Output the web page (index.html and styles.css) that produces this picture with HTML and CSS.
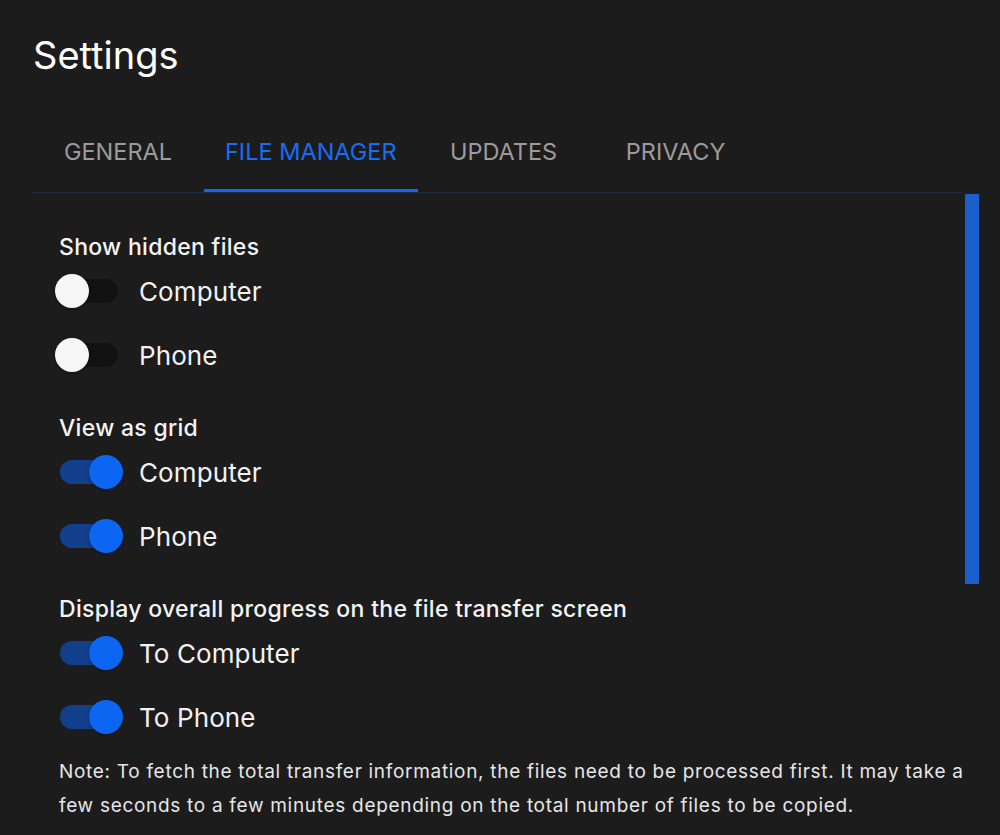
FILE: index.html
```html
<!DOCTYPE html>
<html>
<head>
<meta charset="utf-8">
<link rel="stylesheet" href="styles.css">
</head>
<body>
<div class="page">
  <h1 class="title">Settings</h1>
  <div class="tabs">
    <div class="tab">GENERAL</div>
    <div class="tab active">FILE MANAGER</div>
    <div class="tab">UPDATES</div>
    <div class="tab">PRIVACY</div>
  </div>
  <div class="body">
    <div class="content">
      <div class="section">
        <div class="heading">Show hidden files</div>
        <div class="row"><span class="switch"><span class="track"></span><span class="knob"></span></span><span class="label">Computer</span></div>
        <div class="row"><span class="switch"><span class="track"></span><span class="knob"></span></span><span class="label">Phone</span></div>
      </div>
      <div class="section">
        <div class="heading">View as grid</div>
        <div class="row"><span class="switch on"><span class="track"></span><span class="knob"></span></span><span class="label">Computer</span></div>
        <div class="row"><span class="switch on"><span class="track"></span><span class="knob"></span></span><span class="label">Phone</span></div>
      </div>
      <div class="section">
        <div class="heading">Display overall progress on the file transfer screen</div>
        <div class="row"><span class="switch on"><span class="track"></span><span class="knob"></span></span><span class="label">To Computer</span></div>
        <div class="row"><span class="switch on"><span class="track"></span><span class="knob"></span></span><span class="label">To Phone</span></div>
      </div>
      <p class="note">Note: To fetch the total transfer information, the files need to be processed first. It may take a few seconds to a few minutes depending on the total number of files to be copied.</p>
    </div>
    <div class="scrollbar"><div class="thumb"></div></div>
  </div>
</div>
</body>
</html>
```

FILE: styles.css
```css
html, body {
  margin: 0;
  padding: 0;
  background: #1c1c1c;
  height: 100%;
  overflow: hidden;
}
body {
  font-family: "Inter", "Noto Sans", sans-serif;
  color: #f2f2f2;
}
.page {
  padding: 33px 20px 0 32px;
}
.title {
  margin: 0;
  font-size: 38px;
  line-height: 44px;
  font-weight: 400;
  color: #ffffff;
  padding-left: 1px;
}
.tabs {
  display: flex;
  margin-top: 36px;
  width: 933px;
  border-bottom: 1px solid #1d2a3c;
}
.tab {
  min-width: 172px;
  box-sizing: border-box;
  height: 79px;
  padding: 0 21px;
  display: flex;
  align-items: center;
  justify-content: center;
  font-size: 23.5px;
  font-weight: 400;
  color: #9b9b9b;
  border-bottom: 3px solid transparent;
}
.tab.active {
  color: #1b6cf2;
  border-bottom-color: #1464ec;
}
.body {
  display: flex;
}
.content {
  width: 933px;
  box-sizing: border-box;
  padding: 39px 0 0 27px;
}
.scrollbar {
  width: 14px;
  padding-top: 1px;
}
.thumb {
  width: 14px;
  height: 390px;
  background: #1a5fcc;
}
.section + .section {
  margin-top: 29px;
}
.heading {
  font-size: 23px;
  line-height: 30px;
  font-weight: 500;
  letter-spacing: 0.3px;
  color: #f4f4f4;
}
.row {
  display: flex;
  align-items: center;
  height: 58px;
  margin-left: -4px;
}
.row + .row {
  margin-top: 6px;
}
.switch {
  position: relative;
  width: 68px;
  height: 34px;
  display: flex;
  align-items: center;
  flex: none;
}
.track {
  display: block;
  margin: 0 5px;
  width: 58px;
  height: 24px;
  border-radius: 12px;
  background: #121212;
}
.knob {
  position: absolute;
  top: 0;
  left: 0;
  width: 34px;
  height: 34px;
  border-radius: 50%;
  background: #f6f6f6;
  box-shadow: 0 1px 3px rgba(0,0,0,0.4);
}
.switch.on .track {
  background: #123f8c;
}
.switch.on .knob {
  left: auto;
  right: 0;
  background: #0d66f2;
}
.label {
  margin-left: 16px;
  font-size: 26px;
  font-weight: 400;
  letter-spacing: 0.1px;
  color: #f2f2f2;
}
.note {
  margin: 9px -10px 0 0;
  font-size: 19px;
  line-height: 34px;
  letter-spacing: 0.7px;
  color: #e6e6e6;
}
```
